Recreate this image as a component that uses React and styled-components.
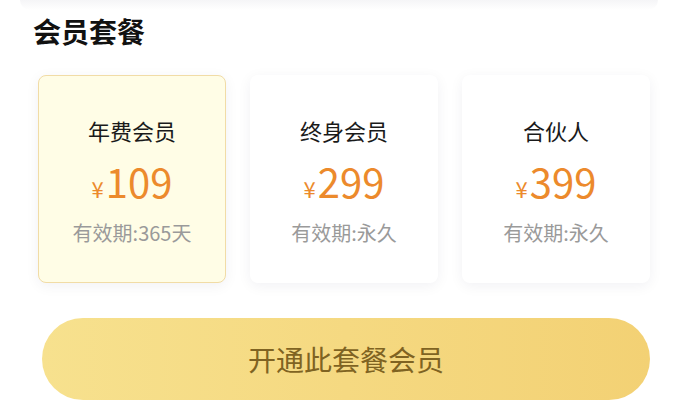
import React from 'react';
import styled, { createGlobalStyle } from 'styled-components';

const GlobalStyle = createGlobalStyle`
  body {
    margin: 0;
    background: #ffffff;
    font-family: "Noto Sans CJK SC", "Noto Sans", sans-serif;
  }
`;

const Page = styled.div`
  width: 678px;
  height: 414px;
  overflow: hidden;
  display: flex;
  flex-direction: column;
`;

const TopEdge = styled.div`
  height: 10px;
  margin: 0 20px;
  background: linear-gradient(#f5f5f7, #ffffff);
  border-radius: 0 0 16px 16px;
`;

const Title = styled.h2`
  margin: 2px 0 0 33px;
  font-size: 28px;
  line-height: 38px;
  font-weight: 700;
  color: #111;
`;

const Plans = styled.div`
  display: grid;
  grid-template-columns: repeat(3, 188px);
  gap: 24px;
  margin: 25px 0 0 38px;
`;

const Plan = styled.div`
  height: 208px;
  box-sizing: border-box;
  border-radius: 8px;
  display: flex;
  flex-direction: column;
  align-items: center;
  padding-top: 39px;
  background: ${p => (p.$active ? '#fffde6' : '#ffffff')};
  border: 1px solid ${p => (p.$active ? '#f1dca6' : 'transparent')};
  box-shadow: 0 3px 14px rgba(20, 20, 60, 0.06);
`;

const PlanName = styled.div`
  font-size: 22px;
  line-height: 30px;
  color: #1a1a1a;
`;

const Price = styled.div`
  margin-top: 12px;
  display: flex;
  align-items: baseline;
  color: #ec8a2c;
  line-height: 48px;
`;

const Yen = styled.span`
  font-size: 22px;
  margin-right: 2px;
`;

const Amount = styled.span`
  font-size: 40px;
`;

const Validity = styled.div`
  margin-top: 7px;
  font-size: 20px;
  line-height: 28px;
  color: #9a9a9a;
`;

const Button = styled.button`
  margin: 35px 0 0 42px;
  width: 608px;
  height: 82px;
  border: none;
  border-radius: 41px;
  background: linear-gradient(90deg, #f7e18e, #f3d174);
  color: #7f6322;
  font-family: inherit;
  font-size: 28px;
  cursor: pointer;
`;

const plans = [
  { name: '年费会员', price: '109', term: '365天', active: true },
  { name: '终身会员', price: '299', term: '永久' },
  { name: '合伙人', price: '399', term: '永久' },
];

export default function App() {
  return (
    <Page>
      <GlobalStyle />
      <TopEdge />
      <Title>会员套餐</Title>
      <Plans>
        {plans.map(p => (
          <Plan key={p.name} $active={p.active}>
            <PlanName>{p.name}</PlanName>
            <Price>
              <Yen>¥</Yen>
              <Amount>{p.price}</Amount>
            </Price>
            <Validity>有效期:{p.term}</Validity>
          </Plan>
        ))}
      </Plans>
      <Button>开通此套餐会员</Button>
    </Page>
  );
}
